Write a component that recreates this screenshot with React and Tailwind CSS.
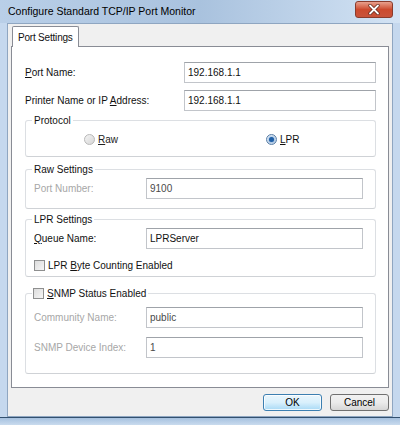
import React from "react";

const Key = ({ children }) => <span className="underline underline-offset-[1px]">{children}</span>;

const Field = ({ value, dim }) => (
  <div
    className={`h-[21px] flex-1 flex items-center pl-[3px] bg-white border border-[#c2c5ca] border-t-[#9fa3a9] ${
      dim ? "text-[#4a4a4a]" : "text-[#111]"
    }`}
  >
    {value}
  </div>
);

const Radio = ({ checked }) => (
  <span
    className={`w-[11px] h-[11px] rounded-full border flex items-center justify-center ${
      checked
        ? "border-[#5a7ea6] bg-gradient-to-br from-[#e4eef8] to-[#b9cde3]"
        : "border-[#b8b8b8] bg-gradient-to-br from-[#f4f4f4] to-[#d6d6d6]"
    }`}
  >
    {checked && <span className="w-[5px] h-[5px] rounded-full bg-[#1f5fa6] shadow-[0_0_2px_#4b8ad0]" />}
  </span>
);

const Check = () => (
  <span className="w-[11px] h-[11px] border border-[#8e8f8f] bg-gradient-to-br from-[#dcdcdc] to-[#f6f6f6] shrink-0" />
);

// legend follows fieldset padding, so padding goes on the inner div
const Group = ({ legend, className = "", inner = "", children }) => (
  <fieldset className={`border border-[#dcdfe3] border-b-[#cfd2d6] rounded-[3px] ${className}`}>
    <legend className="ml-[6px] px-[2px] leading-[13px]">{legend}</legend>
    <div className={inner}>{children}</div>
  </fieldset>
);

export default function App() {
  return (
    <div className="w-[400px] h-[425px] flex flex-col bg-[#c5d8ee] font-['Liberation_Sans',Arial,sans-serif] text-[10px] text-[#111] overflow-hidden">
      {/* title bar */}
      <div className="h-[23px] flex items-start justify-between bg-gradient-to-r from-[#b9cfe8] via-[#a9c2de] to-[#d3e3f4]">
        <span className="pl-[8px] pt-[5px] text-[10.5px] leading-[13px] text-black">
          Configure Standard TCP/IP Port Monitor
        </span>
        <div className="mt-[1px] mr-[7px] w-[38px] h-[17px] rounded-[3px] border border-[#8a3b2c] bg-gradient-to-b from-[#e8a08d] via-[#cc4a2e] to-[#c8533a] flex items-center justify-center">
          <svg width="12" height="11" viewBox="0 0 12 11">
            <path d="M2 1.5 L10 9.5 M10 1.5 L2 9.5" stroke="#5b2318" strokeWidth="3.2" strokeLinecap="round" />
            <path d="M2 1.5 L10 9.5 M10 1.5 L2 9.5" stroke="#fff" strokeWidth="1.8" strokeLinecap="round" />
          </svg>
        </div>
      </div>

      {/* client area */}
      <div className="flex-1 mx-[7px] border border-[#8fa6c1] bg-[#f0f0f0] flex flex-col">
        <div className="mt-[2px] ml-[4px] flex">
          <div className="relative z-10 -mb-[1px] h-[21px] px-[5px] flex items-center bg-white border border-b-0 border-[#898c95] rounded-t-[2px] tracking-[-0.2px]">
            Port Settings
          </div>
        </div>
        <div className="flex-1 mx-[3px] border border-[#898c95] bg-white pl-[13px] pr-[12px] pt-[15px]">
          <div className="flex items-center">
            <span className="w-[159px]">
              <Key>P</Key>ort Name:
            </span>
            <Field value="192.168.1.1" />
          </div>
          <div className="flex items-center mt-[7px]">
            <span className="w-[159px]">
              Printer Name or IP <Key>A</Key>ddress:
            </span>
            <Field value="192.168.1.1" />
          </div>

          <Group legend="Protocol" className="mt-[3px]" inner="pt-[6px] pb-[10px]">
            <div className="flex items-center h-[13px]">
              <div className="w-[182px] pl-[58px] flex items-center gap-[3px] text-[#222]">
                <Radio />
                <span>
                  <Key>R</Key>aw
                </span>
              </div>
              <div className="pl-[58px] flex items-center gap-[3px]">
                <Radio checked />
                <span>
                  <Key>L</Key>PR
                </span>
              </div>
            </div>
          </Group>

          <Group legend="Raw Settings" className="mt-[6px]" inner="pl-[8px] pr-[12px] pt-[2px] pb-[9px]">
            <div className="flex items-center">
              <span className="w-[112px] text-[#a7a7a7]">Port Number:</span>
              <Field value="9100" dim />
            </div>
          </Group>

          <Group legend="LPR Settings" className="mt-[4px]" inner="pl-[8px] pr-[12px] pt-[2px] pb-[5px]">
            <div className="flex items-center">
              <span className="w-[112px]">
                <Key>Q</Key>ueue Name:
              </span>
              <Field value="LPRServer" />
            </div>
            <div className="mt-[10px] flex items-center gap-[3px] h-[12px]">
              <Check />
              <span>
                LPR <Key>B</Key>yte Counting Enabled
              </span>
            </div>
          </Group>

          <Group
            legend={
              <span className="flex items-center gap-[3px] -ml-[1px]">
                <Check />
                <span>
                  <Key>S</Key>NMP Status Enabled
                </span>
              </span>
            }
            className="mt-[10px]"
            inner="pl-[8px] pr-[12px] pt-[7px] pb-[15px]"
          >
            <div className="flex items-center">
              <span className="w-[112px] text-[#a7a7a7]">Community Name:</span>
              <Field value="public" dim />
            </div>
            <div className="flex items-center mt-[9px]">
              <span className="w-[112px] text-[#a7a7a7]">SNMP Device Index:</span>
              <Field value="1" dim />
            </div>
          </Group>
        </div>

        <div className="h-[28px] flex justify-end items-start gap-[8px] pr-[3px] pt-[6px]">
          <button className="w-[59px] h-[17px] rounded-[3px] border border-[#3c7fb1] bg-gradient-to-b from-[#eaf6fd] via-[#d9f0fc] to-[#a7d9f5] shadow-[inset_0_0_0_1px_#ffffffcc] text-[10px] text-black">
            OK
          </button>
          <button className="w-[59px] h-[17px] rounded-[3px] border border-[#707070] bg-gradient-to-b from-[#f2f2f2] via-[#ebebeb] to-[#d6d6d6] text-[10px] text-black">
            Cancel
          </button>
        </div>
      </div>

      {/* bottom frame */}
      <div className="h-[8px] border-t border-[#32506f] bg-gradient-to-b from-[#a6c1df] to-[#c9dbee]" />
    </div>
  );
}
